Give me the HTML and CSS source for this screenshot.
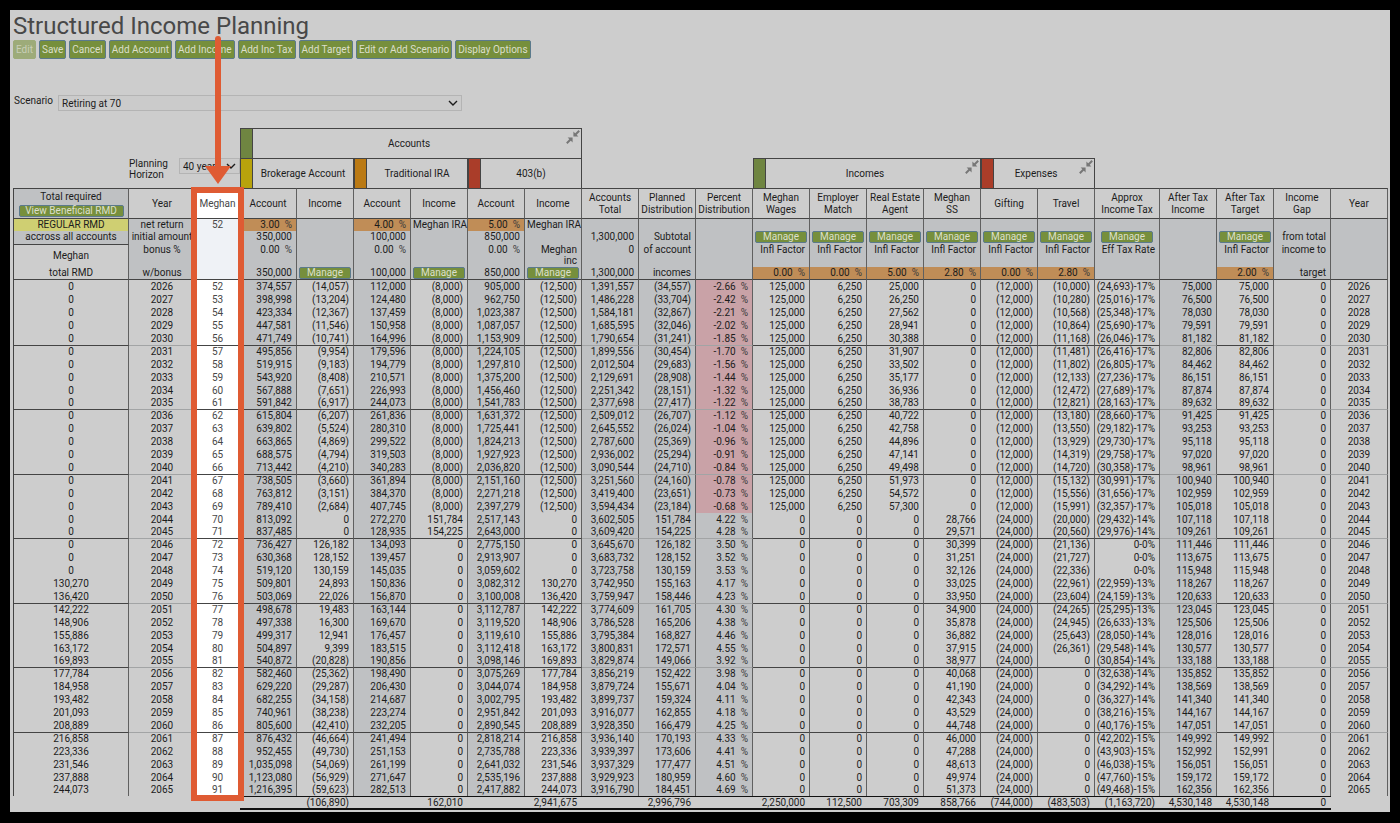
FILE: index.html
```html
<!DOCTYPE html>
<html lang="en">

<head>
    <meta charset="UTF-8">
    <meta name="viewport" content="width=device-width, initial-scale=1.0">
    <title>Structured Income Planning</title>
    <link rel="stylesheet" href="styles.css">
</head>

<body>
    <svg class="symbols" aria-hidden="true">
        <symbol id="collapse" viewBox="0 0 14 14">
            <path d="M13.2 0.8L9.5 4.5M0.8 13.2L4.5 9.5" stroke="currentColor" stroke-width="2" fill="none" />
            <path d="M7.4 1.6V6.6H12.4ZM6.6 12.4V7.4H1.6Z" fill="currentColor" />
        </symbol>
        <symbol id="chevron" viewBox="0 0 10 6">
            <path d="M1 1L5 5L9 1" stroke="currentColor" stroke-width="1.4" fill="none" />
        </symbol>
    </svg>

    <div class="page">
        <h1>Structured Income Planning</h1>

        <div class="toolbar">
            <button class="btn" disabled>Edit</button>
            <button class="btn">Save</button>
            <button class="btn">Cancel</button>
            <button class="btn">Add Account</button>
            <button class="btn">Add Income</button>
            <button class="btn">Add Inc Tax</button>
            <button class="btn">Add Target</button>
            <button class="btn">Edit or Add Scenario</button>
            <button class="btn">Display Options</button>
        </div>

        <div class="scenario">
            <label for="scenario">Scenario</label>
            <div class="select">
                <select id="scenario">
                    <option>Retiring at 70</option>
                </select>
                <svg><use href="#chevron" /></svg>
            </div>
        </div>

        <div class="plan-wrap">
            <table class="plan">
                <colgroup>
                    <col class="w-rmd">
                    <col class="w-year">
                    <col class="w-age">
                    <col span="15">
                    <col class="w-tax">
                    <col span="4">
                </colgroup>
                <thead>
                    <!-- groups -->
                    <tr class="groups">
                        <td colspan="3"></td>
                        <th colspan="6" class="group first top">
                            <div><i class="green"></i><span>Accounts</span><svg><use href="#collapse" /></svg></div>
                        </th>
                        <td colspan="14"></td>
                    </tr>
                    <tr class="groups">
                        <td></td>
                        <td colspan="2">
                            <div class="horizon">
                                <label for="horizon">Planning Horizon</label>
                                <div class="select">
                                    <select id="horizon">
                                        <option>40 years</option>
                                    </select>
                                    <svg><use href="#chevron" /></svg>
                                </div>
                            </div>
                        </td>
                        <th colspan="2" class="group first"><div><i class="yellow"></i><span>Brokerage Account</span></div></th>
                        <th colspan="2" class="group"><div><i class="amber"></i><span>Traditional IRA</span></div></th>
                        <th colspan="2" class="group"><div><i class="red"></i><span>403(b)</span></div></th>
                        <td colspan="3"></td>
                        <th colspan="4" class="group first">
                            <div><i class="green"></i><span>Incomes</span><svg><use href="#collapse" /></svg></div>
                        </th>
                        <th colspan="2" class="group">
                            <div><i class="red"></i><span>Expenses</span><svg><use href="#collapse" /></svg></div>
                        </th>
                        <td colspan="5"></td>
                    </tr>

                    <!-- column names -->
                    <tr class="names">
                        <th class="shade">Total required<button class="btn small wide">View Beneficial RMD</button></th>
                        <th>Year</th>
                        <th class="age">Meghan</th>
                        <th>Account</th>
                        <th>Income</th>
                        <th>Account</th>
                        <th>Income</th>
                        <th>Account</th>
                        <th>Income</th>
                        <th>Accounts Total</th>
                        <th>Planned Distribution</th>
                        <th>Percent Distribution</th>
                        <th>Meghan Wages</th>
                        <th>Employer Match</th>
                        <th>Real Estate Agent</th>
                        <th>Meghan<br>SS</th>
                        <th>Gifting</th>
                        <th>Travel</th>
                        <th>Approx Income Tax</th>
                        <th>After Tax Income</th>
                        <th>After Tax Target</th>
                        <th>Income<br>Gap</th>
                        <th>Year</th>
                    </tr>

                    <!-- settings -->
                    <tr class="setup">
                        <td class="center regular">REGULAR RMD</td>
                        <td class="center">net return</td>
                        <td class="center age">52</td>
                        <td class="rate">3.00<b>%</b></td>
                        <td></td>
                        <td class="rate">4.00<b>%</b></td>
                        <td class="owner">Meghan IRA</td>
                        <td class="rate">5.00<b>%</b></td>
                        <td class="owner">Meghan IRA</td>
                        <td></td><td></td><td></td>
                        <td></td><td></td><td></td><td></td>
                        <td></td><td></td>
                        <td></td><td></td><td></td><td></td><td></td>
                    </tr>
                    <tr class="setup">
                        <td class="center">accross all accounts</td>
                        <td class="center">initial amount</td>
                        <td class="age"></td>
                        <td>350,000</td>
                        <td></td>
                        <td>100,000</td>
                        <td></td>
                        <td>850,000</td>
                        <td></td>
                        <td>1,300,000</td>
                        <td>Subtotal</td>
                        <td></td>
                        <td class="action"><button class="btn small">Manage</button></td>
                        <td class="action"><button class="btn small">Manage</button></td>
                        <td class="action"><button class="btn small">Manage</button></td>
                        <td class="action"><button class="btn small">Manage</button></td>
                        <td class="action"><button class="btn small">Manage</button></td>
                        <td class="action"><button class="btn small">Manage</button></td>
                        <td class="action"><button class="btn small">Manage</button></td>
                        <td></td>
                        <td class="action"><button class="btn small">Manage</button></td>
                        <td>from total</td>
                        <td></td>
                    </tr>
                    <tr class="setup tall">
                        <td class="center person">Meghan</td>
                        <td class="center">bonus %</td>
                        <td class="age"></td>
                        <td>0.00<b>%</b></td>
                        <td></td>
                        <td>0.00<b>%</b></td>
                        <td></td>
                        <td>0.00<b>%</b></td>
                        <td class="wrap">Meghan<br>inc</td>
                        <td>0</td>
                        <td>of account</td>
                        <td></td>
                        <td>Infl Factor</td>
                        <td>Infl Factor</td>
                        <td>Infl Factor</td>
                        <td>Infl Factor</td>
                        <td>Infl Factor</td>
                        <td>Infl Factor</td>
                        <td>Eff Tax Rate</td>
                        <td></td>
                        <td>Infl Factor</td>
                        <td>income to</td>
                        <td></td>
                    </tr>
                    <tr class="setup last">
                        <td class="center plain">total RMD</td>
                        <td class="center">w/bonus</td>
                        <td class="age"></td>
                        <td>350,000</td>
                        <td class="action"><button class="btn small">Manage</button></td>
                        <td>100,000</td>
                        <td class="action"><button class="btn small">Manage</button></td>
                        <td>850,000</td>
                        <td class="action"><button class="btn small">Manage</button></td>
                        <td>1,300,000</td>
                        <td>incomes</td>
                        <td></td>
                        <td class="rate">0.00<b>%</b></td>
                        <td class="rate">0.00<b>%</b></td>
                        <td class="rate">5.00<b>%</b></td>
                        <td class="rate">2.80<b>%</b></td>
                        <td class="rate">0.00<b>%</b></td>
                        <td class="rate">2.80<b>%</b></td>
                        <td></td>
                        <td></td>
                        <td class="rate">2.00<b>%</b></td>
                        <td>target</td>
                        <td></td>
                    </tr>
                </thead>
                <tbody id="years"></tbody>
                <tfoot>
                    <tr>
                        <td class="none" colspan="3"></td>
                        <td></td>
                        <td>(106,890)</td>
                        <td></td>
                        <td>162,010</td>
                        <td></td>
                        <td>2,941,675</td>
                        <td></td>
                        <td>2,996,796</td>
                        <td></td>
                        <td>2,250,000</td>
                        <td>112,500</td>
                        <td>703,309</td>
                        <td>858,766</td>
                        <td>(744,000)</td>
                        <td>(483,503)</td>
                        <td>(1,163,720)</td>
                        <td>4,530,148</td>
                        <td>4,530,148</td>
                        <td>0</td>
                        <td class="none"></td>
                    </tr>
                </tfoot>
            </table>

            <div class="highlight">
                <svg class="arrow" viewBox="0 0 28 150">
                    <path d="M14 4V134" stroke="currentColor" stroke-width="6" stroke-linecap="round" />
                    <path d="M1 131H27L14 149Z" fill="currentColor" />
                </svg>
            </div>
        </div>
    </div>

    <script src="script.js"></script>
</body>

</html>
```
FILE: styles.css
```css
* {
  margin: 0;
  padding: 0;
  box-sizing: border-box;
}

body {
  background-color: #000;
  color: #1c1c1c;
  font-family: Roboto, "Liberation Sans", sans-serif;
  font-size: 10px;
  line-height: 12px;
  padding: 10px;
}

.symbols {
  display: none;
}

.page {
  background-color: #cdcdcd;
  padding: 0 2px 2px 3px;
}

h1 {
  font-size: 24px;
  font-weight: 400;
  line-height: 30px;
  padding-top: 1px;
  height: 30px;
  color: #484848;
}

/* buttons */

.toolbar {
  display: flex;
  gap: 3px;
}

.btn {
  font-family: inherit;
  font-size: 10px;
  line-height: 17px;
  color: #dcdfcb;
  background-color: #768f3c;
  border: 1px solid #5b7a8c;
  border-radius: 2px;
  padding: 0 2px;
  cursor: pointer;
}

.btn:disabled {
  background-color: #9dab79;
  border-color: #9dab79;
  color: #c9cfb8;
}

.btn.small {
  display: block;
  width: 52px;
  max-width: 100%;
  margin: 0 auto;
  line-height: 10px;
  padding: 0;
}

.btn.wide {
  width: 105px;
  margin-top: 2px;
}

/* selects */

.scenario {
  display: flex;
  gap: 5px;
  margin: 36px 0 17px 1px;
}

.scenario .select {
  width: 404px;
}

.select {
  display: flex;
  align-items: center;
}

.select select {
  appearance: none;
  font-family: inherit;
  font-size: 10px;
  color: #1c1c1c;
  background-color: #cbcbcb;
  border: 1px solid #b4b4b4;
  width: 100%;
  height: 16px;
  padding: 0 3px;
}

.select svg {
  width: 10px;
  height: 6px;
  margin-left: -14px;
  pointer-events: none;
}

.horizon {
  display: flex;
  align-items: flex-start;
  line-height: 11px;
}

.horizon label {
  width: 50px;
}

.horizon .select {
  flex: 1;
}

/* table */

.plan-wrap {
  position: relative;
}

.plan {
  width: 100%;
  table-layout: fixed;
  border-collapse: separate;
  border-spacing: 0;
}

.w-rmd {
  width: 116px;
}

.w-year {
  width: 67px;
}

.w-age {
  width: 44px;
}

.w-tax {
  width: 65px;
}

.plan th {
  font-weight: 400;
}

.groups {
  height: 30px;
}

.groups td {
  vertical-align: top;
}

.group {
  border-top: 1px solid #444;
  border-right: 1px solid #444;
}

.group div {
  display: flex;
  align-items: center;
  height: 29px;
}

.group i {
  align-self: stretch;
  width: 13px;
  border-left: 1px solid #444;
  border-right: 1px solid #444;
}

.group span {
  flex: 1;
}

.group svg {
  align-self: flex-start;
  width: 14px;
  height: 14px;
  margin: 1px 1px 0;
  color: #777;
}

.green {
  background-color: #6f8541;
}

.yellow {
  background-color: #b8a30c;
}

.amber {
  background-color: #bb7a14;
}

.red {
  background-color: #aa3d29;
}

.names th {
  height: 30px;
  border-top: 1px solid #444;
  border-right: 1px solid #606060;
}

.names .shade,
.setup td {
  background-color: #bfc1c3;
}

.setup td {
  height: 13px;
  padding-right: 4px;
  text-align: right;
  vertical-align: top;
  white-space: nowrap;
  border-right: 1px solid #606060;
}

.names + .setup td {
  border-top: 1px solid #444;
}

.setup.tall td {
  height: 23px;
}

.setup.last td {
  border-bottom: 1px solid #444;
}

.setup .wrap {
  line-height: 11px;
}

.setup .owner {
  padding: 0;
}

.setup .action {
  padding: 0 2px;
}

.setup .person {
  border-top: 1px solid #444;
  vertical-align: middle;
}

.plan .person,
.plan .plain {
  background-color: #cdcdcd;
}

.plan .regular {
  background-color: #cfcf72;
}

.plan .rate {
  background-color: #c08d57;
}

.plan .center {
  text-align: center;
  padding: 0;
}

.names th:first-child,
.setup td:first-child,
tbody td:first-child {
  border-left: 1px solid #444;
}

.plan b {
  font-weight: 400;
  color: #3c3c3c;
  margin-left: 5px;
}

tbody td {
  height: 13px;
  padding-right: 4px;
  text-align: right;
  white-space: nowrap;
  border-right: 1px solid #606060;
}

tbody tr:nth-child(10n) td {
  height: 12px;
}

/* a line above every fifth year */
tbody tr:nth-child(5n + 6) td {
  border-top: 1px solid #444;
}

tbody tr:nth-child(5n + 6) .faint {
  border-top-color: #a2a4a5;
}

tbody .shade {
  background-color: #bfc1c3;
}

tbody .negative {
  background-color: #c9a2a7;
}

.plan .age {
  background-color: #fff;
  color: #484848;
}

.plan .setup .age {
  background-color: #eff2f6;
}

tfoot td {
  height: 14px;
  line-height: 11px;
  padding-right: 5px;
  text-align: right;
  border-top: 1px solid #111;
  border-bottom: 2px solid #111;
}

tfoot .none {
  border: 0;
}

/* callout over the age column */

.highlight {
  position: absolute;
  top: 59px;
  bottom: 9px;
  left: 12.95%;
  width: 53px;
  border: 6px solid #df5b33;
  color: #df5b33;
}

.arrow {
  position: absolute;
  bottom: 100%;
  left: 50%;
  width: 28px;
  height: 150px;
  margin: 0 0 8px -14px;
}
```
FILE: script.js
```js
// rmd, account/income x3, total, planned, percent, wages, match, agent, ss, gifting, travel, tax, income, target, gap
const rows = `
0 374,557 (14,057) 112,000 (8,000) 905,000 (12,500) 1,391,557 (34,557) -2.66 125,000 6,250 25,000 0 (12,000) (10,000) (24,693)-17% 75,000 75,000 0
0 398,998 (13,204) 124,480 (8,000) 962,750 (12,500) 1,486,228 (33,704) -2.42 125,000 6,250 26,250 0 (12,000) (10,280) (25,016)-17% 76,500 76,500 0
0 423,334 (12,367) 137,459 (8,000) 1,023,387 (12,500) 1,584,181 (32,867) -2.21 125,000 6,250 27,562 0 (12,000) (10,568) (25,348)-17% 78,030 78,030 0
0 447,581 (11,546) 150,958 (8,000) 1,087,057 (12,500) 1,685,595 (32,046) -2.02 125,000 6,250 28,941 0 (12,000) (10,864) (25,690)-17% 79,591 79,591 0
0 471,749 (10,741) 164,996 (8,000) 1,153,909 (12,500) 1,790,654 (31,241) -1.85 125,000 6,250 30,388 0 (12,000) (11,168) (26,046)-17% 81,182 81,182 0
0 495,856 (9,954) 179,596 (8,000) 1,224,105 (12,500) 1,899,556 (30,454) -1.70 125,000 6,250 31,907 0 (12,000) (11,481) (26,416)-17% 82,806 82,806 0
0 519,915 (9,183) 194,779 (8,000) 1,297,810 (12,500) 2,012,504 (29,683) -1.56 125,000 6,250 33,502 0 (12,000) (11,802) (26,805)-17% 84,462 84,462 0
0 543,920 (8,408) 210,571 (8,000) 1,375,200 (12,500) 2,129,691 (28,908) -1.44 125,000 6,250 35,177 0 (12,000) (12,133) (27,236)-17% 86,151 86,151 0
0 567,888 (7,651) 226,993 (8,000) 1,456,460 (12,500) 2,251,342 (28,151) -1.32 125,000 6,250 36,936 0 (12,000) (12,472) (27,689)-17% 87,874 87,874 0
0 591,842 (6,917) 244,073 (8,000) 1,541,783 (12,500) 2,377,698 (27,417) -1.22 125,000 6,250 38,783 0 (12,000) (12,821) (28,163)-17% 89,632 89,632 0
0 615,804 (6,207) 261,836 (8,000) 1,631,372 (12,500) 2,509,012 (26,707) -1.12 125,000 6,250 40,722 0 (12,000) (13,180) (28,660)-17% 91,425 91,425 0
0 639,802 (5,524) 280,310 (8,000) 1,725,441 (12,500) 2,645,552 (26,024) -1.04 125,000 6,250 42,758 0 (12,000) (13,550) (29,182)-17% 93,253 93,253 0
0 663,865 (4,869) 299,522 (8,000) 1,824,213 (12,500) 2,787,600 (25,369) -0.96 125,000 6,250 44,896 0 (12,000) (13,929) (29,730)-17% 95,118 95,118 0
0 688,575 (4,794) 319,503 (8,000) 1,927,923 (12,500) 2,936,002 (25,294) -0.91 125,000 6,250 47,141 0 (12,000) (14,319) (29,758)-17% 97,020 97,020 0
0 713,442 (4,210) 340,283 (8,000) 2,036,820 (12,500) 3,090,544 (24,710) -0.84 125,000 6,250 49,498 0 (12,000) (14,720) (30,358)-17% 98,961 98,961 0
0 738,505 (3,660) 361,894 (8,000) 2,151,160 (12,500) 3,251,560 (24,160) -0.78 125,000 6,250 51,973 0 (12,000) (15,132) (30,991)-17% 100,940 100,940 0
0 763,812 (3,151) 384,370 (8,000) 2,271,218 (12,500) 3,419,400 (23,651) -0.73 125,000 6,250 54,572 0 (12,000) (15,556) (31,656)-17% 102,959 102,959 0
0 789,410 (2,684) 407,745 (8,000) 2,397,279 (12,500) 3,594,434 (23,184) -0.68 125,000 6,250 57,300 0 (12,000) (15,991) (32,357)-17% 105,018 105,018 0
0 813,092 0 272,270 151,784 2,517,143 0 3,602,505 151,784 4.22 0 0 0 28,766 (24,000) (20,000) (29,432)-14% 107,118 107,118 0
0 837,485 0 128,935 154,225 2,643,000 0 3,609,420 154,225 4.28 0 0 0 29,571 (24,000) (20,560) (29,976)-14% 109,261 109,261 0
0 736,427 126,182 134,093 0 2,775,150 0 3,645,670 126,182 3.50 0 0 0 30,399 (24,000) (21,136) 0-0% 111,446 111,446 0
0 630,368 128,152 139,457 0 2,913,907 0 3,683,732 128,152 3.52 0 0 0 31,251 (24,000) (21,727) 0-0% 113,675 113,675 0
0 519,120 130,159 145,035 0 3,059,602 0 3,723,758 130,159 3.53 0 0 0 32,126 (24,000) (22,336) 0-0% 115,948 115,948 0
130,270 509,801 24,893 150,836 0 3,082,312 130,270 3,742,950 155,163 4.17 0 0 0 33,025 (24,000) (22,961) (22,959)-13% 118,267 118,267 0
136,420 503,069 22,026 156,870 0 3,100,008 136,420 3,759,947 158,446 4.23 0 0 0 33,950 (24,000) (23,604) (24,159)-13% 120,633 120,633 0
142,222 498,678 19,483 163,144 0 3,112,787 142,222 3,774,609 161,705 4.30 0 0 0 34,900 (24,000) (24,265) (25,295)-13% 123,045 123,045 0
148,906 497,338 16,300 169,670 0 3,119,520 148,906 3,786,528 165,206 4.38 0 0 0 35,878 (24,000) (24,945) (26,633)-13% 125,506 125,506 0
155,886 499,317 12,941 176,457 0 3,119,610 155,886 3,795,384 168,827 4.46 0 0 0 36,882 (24,000) (25,643) (28,050)-14% 128,016 128,016 0
163,172 504,897 9,399 183,515 0 3,112,418 163,172 3,800,831 172,571 4.55 0 0 0 37,915 (24,000) (26,361) (29,548)-14% 130,577 130,577 0
169,893 540,872 (20,828) 190,856 0 3,098,146 169,893 3,829,874 149,066 3.92 0 0 0 38,977 (24,000) 0 (30,854)-14% 133,188 133,188 0
177,784 582,460 (25,362) 198,490 0 3,075,269 177,784 3,856,219 152,422 3.98 0 0 0 40,068 (24,000) 0 (32,638)-14% 135,852 135,852 0
184,958 629,220 (29,287) 206,430 0 3,044,074 184,958 3,879,724 155,671 4.04 0 0 0 41,190 (24,000) 0 (34,292)-14% 138,569 138,569 0
193,482 682,255 (34,158) 214,687 0 3,002,795 193,482 3,899,737 159,324 4.11 0 0 0 42,343 (24,000) 0 (36,327)-14% 141,340 141,340 0
201,093 740,961 (38,238) 223,274 0 2,951,842 201,093 3,916,077 162,855 4.18 0 0 0 43,529 (24,000) 0 (38,216)-15% 144,167 144,167 0
208,889 805,600 (42,410) 232,205 0 2,890,545 208,889 3,928,350 166,479 4.25 0 0 0 44,748 (24,000) 0 (40,176)-15% 147,051 147,051 0
216,858 876,432 (46,664) 241,494 0 2,818,214 216,858 3,936,140 170,193 4.33 0 0 0 46,000 (24,000) 0 (42,202)-15% 149,992 149,992 0
223,336 952,455 (49,730) 251,153 0 2,735,788 223,336 3,939,397 173,606 4.41 0 0 0 47,288 (24,000) 0 (43,903)-15% 152,992 152,991 0
231,546 1,035,098 (54,069) 261,199 0 2,641,032 231,546 3,937,329 177,477 4.51 0 0 0 48,613 (24,000) 0 (46,038)-15% 156,051 156,051 0
237,888 1,123,080 (56,929) 271,647 0 2,535,196 237,888 3,929,923 180,959 4.60 0 0 0 49,974 (24,000) 0 (47,760)-15% 159,172 159,172 0
244,073 1,216,395 (59,623) 282,513 0 2,417,882 244,073 3,916,790 184,451 4.69 0 0 0 51,373 (24,000) 0 (49,468)-15% 162,356 162,356 0
`.trim().split('\n');

// classes by column index
const classes = {
    0: 'center',
    1: 'center faint',
    2: 'center age',
    3: 'shade',
    5: 'shade',
    7: 'shade',
    9: 'shade faint',
    10: 'shade faint',
    11: 'shade faint',
    19: 'shade faint',
    21: 'faint',
    22: 'center faint'
};
const PERCENT = 11;

const body = document.getElementById('years');

rows.forEach((line, i) => {
    const year = 2026 + i;
    const [rmd, ...rest] = line.split(' ');
    const tr = document.createElement('tr');

    [rmd, year, 52 + i, ...rest, year].forEach((value, col) => {
        const td = document.createElement('td');
        td.className = classes[col] || '';
        td.textContent = value;
        if (col === PERCENT) {
            td.insertAdjacentHTML('beforeend', '<b>%</b>');
            if (value.startsWith('-')) td.classList.add('negative');
        }
        tr.appendChild(td);
    });

    body.appendChild(tr);
});
```
